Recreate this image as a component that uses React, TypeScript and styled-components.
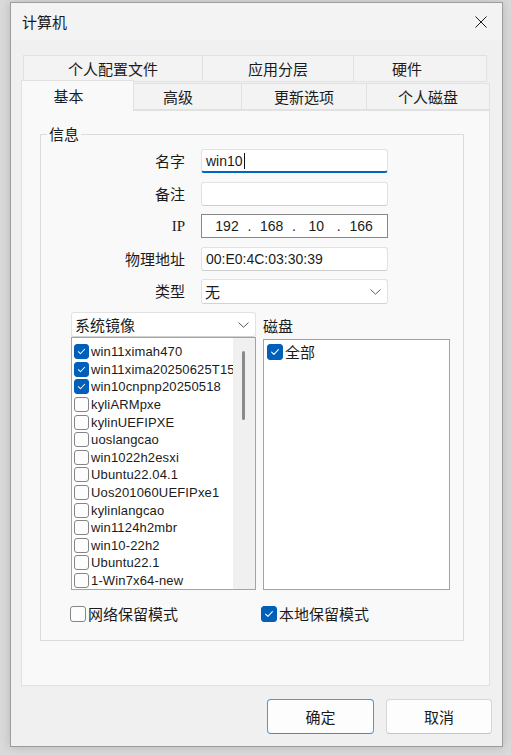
import React from "react";
import styled, { createGlobalStyle } from "styled-components";

const CJK = `"Noto Sans CJK SC", "Liberation Sans", sans-serif`;
const LAT = `"Liberation Sans", "Noto Sans CJK SC", sans-serif`;

const GlobalStyle = createGlobalStyle`
  html, body { margin: 0; padding: 0; background: #dadada; }
  body { font-family: ${LAT}; color: #1b1b1b; width: 511px; height: 755px; overflow: hidden; }
  * { box-sizing: border-box; }
`;

const Window = styled.div`
  margin: 2px 0 0 10px;
  width: 493px;
  height: 745px;
  border: 1px solid #9d9d9d;
  background: #f0f0f0;
  display: flex;
  flex-direction: column;
  box-shadow: 0 0 10px rgba(0, 0, 0, 0.16);
`;

const TitleBar = styled.div`
  height: 37px;
  flex: none;
  background: #f3f3f3;
  display: flex;
  align-items: center;
  justify-content: space-between;
  padding: 0 15px 0 11px;
`;

const Title = styled.div`
  font-family: ${CJK};
  font-size: 15px;
  line-height: 20px;
  color: #1a1a1a;
`;

const CloseBtn = styled.div`
  width: 12px;
  height: 12px;
  display: flex;
`;

const Body = styled.div`
  flex: 1;
  display: flex;
  flex-direction: column;
  padding: 15px 12px 0 10px;
`;

const TabRow = styled.div<{ $inset: number; $h: number }>`
  display: flex;
  align-items: flex-end;
  height: ${(p) => p.$h}px;
  margin-left: ${(p) => p.$inset}px;
`;

const Tab = styled.div<{ $w: number; $shift?: number; $active?: boolean }>`
  width: ${(p) => p.$w}px;
  height: ${(p) => (p.$active ? 31 : 27)}px;
  flex: none;
  display: flex;
  align-items: center;
  justify-content: center;
  padding-right: ${(p) => p.$shift ?? 0}px;
  font-family: ${CJK};
  font-size: 15px;
  line-height: 20px;
  color: #1b1b1b;
  background: ${(p) => (p.$active ? "#f9f9f9" : "#f3f3f3")};
  border: 1px solid #e1e1e1;
  border-bottom: ${(p) => (p.$active ? "none" : "1px solid #e1e1e1")};
  position: relative;
  z-index: ${(p) => (p.$active ? 2 : 1)};
  margin-bottom: ${(p) => (p.$active ? -1 : 0)}px;
  & + & { margin-left: -1px; }
`;

const Panel = styled.div`
  height: 576px;
  flex: none;
  background: #f9f9f9;
  border: 1px solid #e1e1e1;
  padding: 13px 25px 0 18px;
`;

const Group = styled.fieldset`
  margin: 0;
  padding: 5px 0 0 0;
  height: 517px;
  border: 1px solid #dcdcdc;
  border-radius: 0;
  display: flex;
  flex-direction: column;
`;

const Legend = styled.legend`
  margin-left: 6px;
  padding: 0 2px;
  font-family: ${CJK};
  font-size: 15px;
  line-height: 20px;
`;

const Form = styled.div`
  display: grid;
  grid-template-columns: 144px 187px;
  grid-auto-rows: 24px;
  column-gap: 16px;
  row-gap: 8.5px;
`;

const Label = styled.div<{ $serif?: boolean }>`
  align-self: center;
  text-align: right;
  font-family: ${(p) => (p.$serif ? `"Liberation Serif", serif` : CJK)};
  font-size: 15px;
  line-height: 20px;
`;

const Field = styled.div<{ $focus?: boolean }>`
  height: 24px;
  background: #ffffff;
  border: 1px solid #e2e2e2;
  border-bottom: ${(p) => (p.$focus ? "2px solid #0067c0" : "1px solid #cfcfcf")};
  border-radius: 3px;
  padding-left: 4px;
  display: flex;
  align-items: center;
  font-family: ${LAT};
  font-size: 14px;
  color: #1b1b1b;
`;

const Caret = styled.span`
  width: 1px;
  height: 16px;
  background: #111;
  margin-left: 1px;
`;

const IpBox = styled.div`
  height: 24px;
  background: #ffffff;
  border: 1px solid #888888;
  padding-left: 5px;
  display: flex;
  align-items: center;
  font-family: ${LAT};
  font-size: 14px;
`;

const IpSeg = styled.span`
  width: 40px;
  text-align: center;
`;

const IpDot = styled.span`
  width: 4.7px;
  text-align: center;
`;

const Combo = styled.div<{ $h: number }>`
  height: ${(p) => p.$h}px;
  background: #ffffff;
  border: 1px solid #e2e2e2;
  border-bottom-color: #d2d2d2;
  border-radius: 3px;
  padding: 0 6px 0 3px;
  display: flex;
  align-items: center;
  justify-content: space-between;
  font-family: ${CJK};
  font-size: 15px;
  line-height: 20px;
`;

const Lower = styled.div`
  display: grid;
  grid-template-columns: 185px 187px;
  column-gap: 7px;
  margin-top: 9px;
  padding-left: 30px;
`;

const Column = styled.div`
  display: flex;
  flex-direction: column;
`;

const DiskTitle = styled.div`
  height: 27px;
  display: flex;
  align-items: center;
  font-family: ${CJK};
  font-size: 15px;
  line-height: 20px;
`;

const ListBox = styled.div<{ $h: number }>`
  height: ${(p) => p.$h}px;
  background: #ffffff;
  border: 1px solid #a3a3a3;
  display: flex;
`;

const Items = styled.div`
  flex: 1;
  min-width: 0;
  overflow: hidden;
  padding: 5px 0 0 2px;
`;

const Item = styled.div`
  height: 17.6px;
  display: flex;
  align-items: center;
  gap: 2px;
  white-space: nowrap;
  font-family: ${LAT};
  font-size: 13px;
  letter-spacing: 0.15px;
  color: #1b1b1b;
`;

const Track = styled.div`
  width: 22px;
  flex: none;
  background: #f0f0f0;
  padding: 13px 0 0 9px;
`;

const Thumb = styled.div`
  width: 3px;
  height: 69px;
  border-radius: 2px;
  background: #8a8a8a;
`;

const DiskItems = styled.div`
  padding: 4px 0 0 3px;
`;

const DiskItem = styled.div`
  height: 16px;
  display: flex;
  align-items: center;
  gap: 2px;
  font-family: ${CJK};
  font-size: 15px;
  line-height: 20px;
`;

const Box = styled.span<{ $on: boolean; $size: number }>`
  width: ${(p) => p.$size}px;
  height: ${(p) => p.$size}px;
  flex: none;
  border-radius: 3px;
  background: ${(p) => (p.$on ? "#005fb8" : "#fdfdfd")};
  border: 1px solid ${(p) => (p.$on ? "#005fb8" : "#858585")};
  display: flex;
  align-items: center;
  justify-content: center;
`;

const Options = styled.div`
  display: flex;
  margin-top: 16px;
  padding-left: 29px;
`;

const Option = styled.div<{ $w?: number }>`
  width: ${(p) => (p.$w ? `${p.$w}px` : "auto")};
  height: 16px;
  display: flex;
  align-items: center;
  gap: 2px;
  font-family: ${CJK};
  font-size: 15px;
  line-height: 20px;
`;

const Footer = styled.div`
  display: flex;
  justify-content: flex-end;
  gap: 12px;
  padding-top: 13px;
  margin-right: -2px;
`;

const Button = styled.div<{ $primary?: boolean }>`
  width: ${(p) => (p.$primary ? 107 : 106)}px;
  height: 35px;
  border-radius: 4px;
  background: #fdfdfd;
  border: 1px solid ${(p) => (p.$primary ? "#4a97e2" : "#d6d6d6")};
  border-bottom-color: ${(p) => (p.$primary ? "#3d8bdc" : "#c4c4c4")};
  display: flex;
  align-items: center;
  justify-content: center;
  font-family: ${CJK};
  font-size: 15px;
  line-height: 20px;
  color: #1b1b1b;
`;

const Check = ({ on, size = 15 }: { on: boolean; size?: number }) => (
  <Box $on={on} $size={size}>
    {on && (
      <svg width={size - 2} height={size - 2} viewBox="0 0 14 14">
        <path d="M3.6 7.2 L5.9 9.4 L10.4 4.6" fill="none" stroke="#ffffff" strokeWidth="1.1" strokeLinecap="round" strokeLinejoin="round" />
      </svg>
    )}
  </Box>
);

const Chevron = () => (
  <svg width="11" height="6" viewBox="0 0 11 6">
    <path d="M0.5 0.5 L5.5 5.2 L10.5 0.5" fill="none" stroke="#5a5a5a" strokeWidth="1" />
  </svg>
);

const images = [
  { name: "win11ximah470", on: true },
  { name: "win11xima20250625T15", on: true },
  { name: "win10cnpnp20250518", on: true },
  { name: "kyliARMpxe", on: false },
  { name: "kylinUEFIPXE", on: false },
  { name: "uoslangcao", on: false },
  { name: "win1022h2esxi", on: false },
  { name: "Ubuntu22.04.1", on: false },
  { name: "Uos201060UEFIPxe1", on: false },
  { name: "kylinlangcao", on: false },
  { name: "win1124h2mbr", on: false },
  { name: "win10-22h2", on: false },
  { name: "Ubuntu22.1", on: false },
  { name: "1-Win7x64-new", on: false },
];

export default function App() {
  return (
    <>
      <GlobalStyle />
      <Window>
        <TitleBar>
          <Title>计算机</Title>
          <CloseBtn>
            <svg width="12" height="12" viewBox="0 0 12 12">
              <path d="M0.5 0.5 L11.5 11.5 M11.5 0.5 L0.5 11.5" stroke="#1b1b1b" strokeWidth="1" />
            </svg>
          </CloseBtn>
        </TitleBar>
        <Body>
          <TabRow $inset={2} $h={27}>
            <Tab $w={180}>个人配置文件</Tab>
            <Tab $w={152}>应用分层</Tab>
            <Tab $w={134} $shift={26}>硬件</Tab>
          </TabRow>
          <TabRow $inset={0} $h={28}>
            <Tab $w={113} $shift={18} $active>基本</Tab>
            <Tab $w={109} $shift={19}>高级</Tab>
            <Tab $w={126}>更新选项</Tab>
            <Tab $w={124}>个人磁盘</Tab>
          </TabRow>
          <Panel>
            <Group>
              <Legend>信息</Legend>
              <Form>
                <Label>名字</Label>
                <Field $focus>
                  win10
                  <Caret />
                </Field>
                <Label>备注</Label>
                <Field />
                <Label $serif>IP</Label>
                <IpBox>
                  <IpSeg>192</IpSeg>
                  <IpDot>.</IpDot>
                  <IpSeg>168</IpSeg>
                  <IpDot>.</IpDot>
                  <IpSeg>10</IpSeg>
                  <IpDot>.</IpDot>
                  <IpSeg>166</IpSeg>
                </IpBox>
                <Label>物理地址</Label>
                <Field>00:E0:4C:03:30:39</Field>
                <Label>类型</Label>
                <Combo $h={25}>
                  无
                  <Chevron />
                </Combo>
              </Form>
              <Lower>
                <Column>
                  <Combo $h={25}>
                    系统镜像
                    <Chevron />
                  </Combo>
                  <ListBox $h={253}>
                    <Items>
                      {images.map((it) => (
                        <Item key={it.name}>
                          <Check on={it.on} />
                          {it.name}
                        </Item>
                      ))}
                    </Items>
                    <Track>
                      <Thumb />
                    </Track>
                  </ListBox>
                </Column>
                <Column>
                  <DiskTitle>磁盘</DiskTitle>
                  <ListBox $h={251}>
                    <DiskItems>
                      <DiskItem>
                        <Check on size={16} />
                        全部
                      </DiskItem>
                    </DiskItems>
                  </ListBox>
                </Column>
              </Lower>
              <Options>
                <Option $w={191}>
                  <Check on={false} size={16} />
                  网络保留模式
                </Option>
                <Option>
                  <Check on size={16} />
                  本地保留模式
                </Option>
              </Options>
            </Group>
          </Panel>
          <Footer>
            <Button $primary>确定</Button>
            <Button>取消</Button>
          </Footer>
        </Body>
      </Window>
    </>
  );
}
